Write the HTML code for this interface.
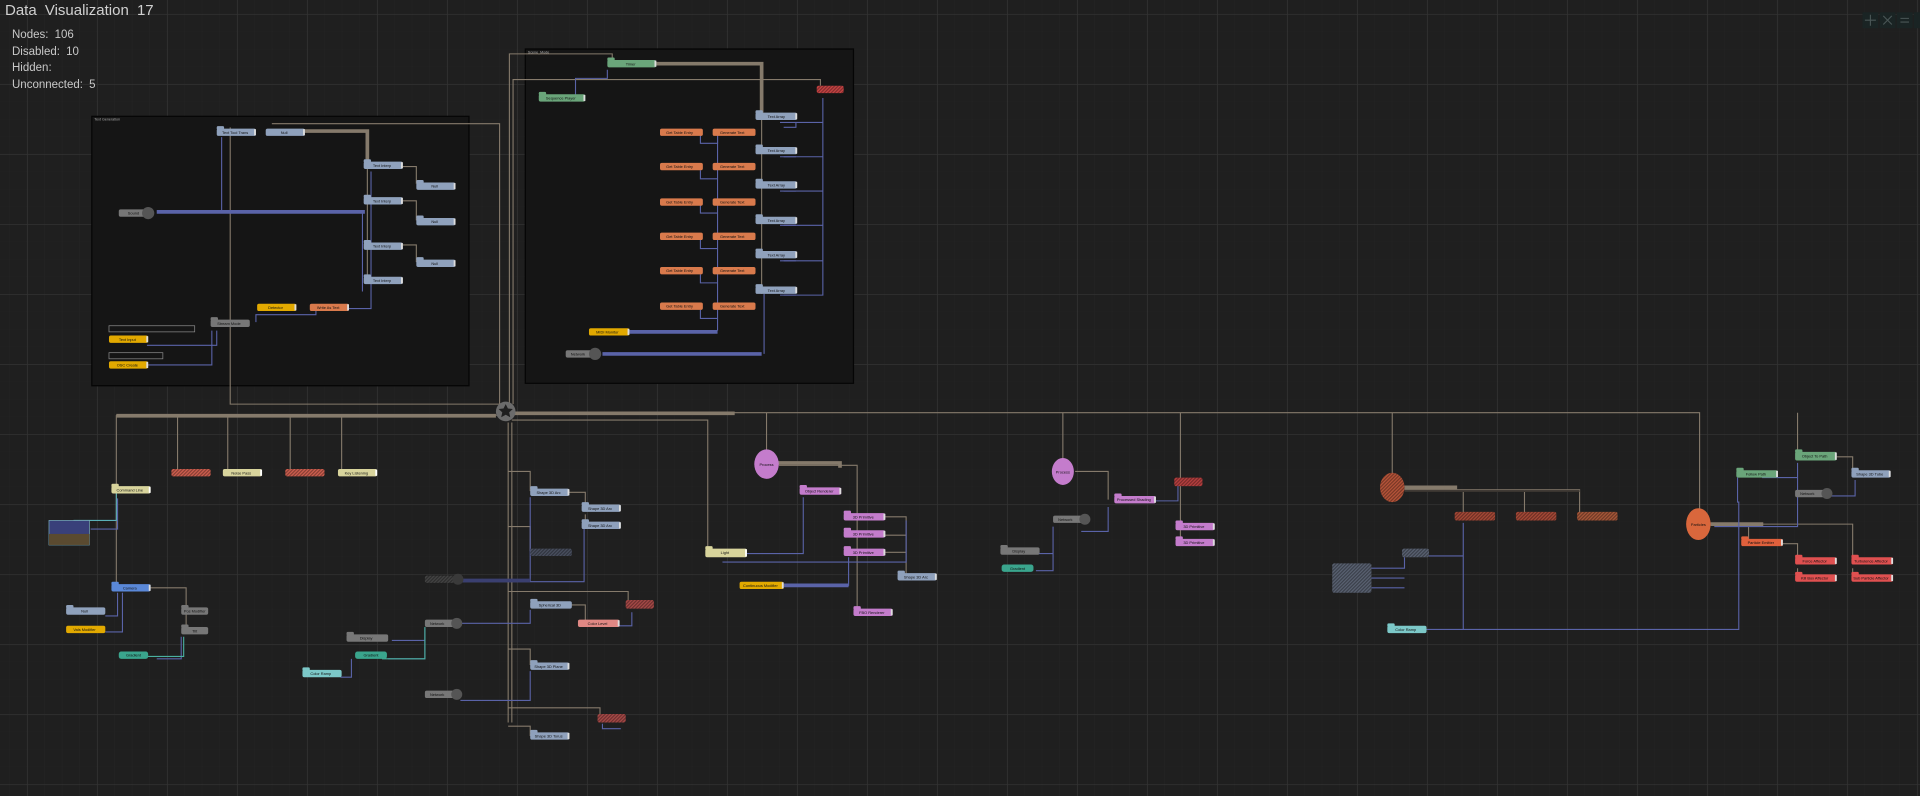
<!DOCTYPE html>
<html><head><meta charset="utf-8"><style>
html,body{margin:0;padding:0;background:#1f1f1f;width:1920px;height:796px;overflow:hidden}
#t{position:absolute;left:5px;top:2px;font:15px "Liberation Sans",sans-serif;color:#d0d0d0;word-spacing:4px}
#s{position:absolute;left:12px;top:27px;font:11.5px/16.5px "Liberation Sans",sans-serif;color:#c8c8c8;word-spacing:3px}
svg{position:absolute;left:0;top:0}
.n text{font:3.2px "Liberation Sans",sans-serif;fill:#111;text-anchor:middle}
</style></head><body>
<svg width="1920" height="796" viewBox="0 0 1568 650" preserveAspectRatio="none">
<defs>
<pattern id="gm" width="14.29" height="14.29" patternUnits="userSpaceOnUse" x="22" y="11.4"><path d="M0 0H14.29M0 0V14.29" stroke="#242424" stroke-width="0.6"/></pattern>
<pattern id="gM" width="57.17" height="57.17" patternUnits="userSpaceOnUse" x="22" y="11.4"><path d="M0 0H57.17M0 0V57.17" stroke="#323232" stroke-width="1.3"/></pattern>
<pattern id="h" width="2" height="2" patternUnits="userSpaceOnUse" patternTransform="rotate(45)"><rect width="1" height="2" fill="#000" opacity="0.35"/></pattern>
</defs>
<rect width="1568" height="650" fill="#1f1f1f"/>
<rect width="1568" height="650" fill="url(#gm)"/>
<rect width="1568" height="650" fill="url(#gM)"/>

<rect x="75" y="95" width="308" height="220" fill="#151515" stroke="#050505" stroke-width="1"/>
<text x="77" y="98.5" font-size="3" fill="#aaa" font-family="Liberation Sans">Text Generation</text>
<rect x="429" y="40" width="268" height="273" fill="#151515" stroke="#050505" stroke-width="1"/>
<text x="431" y="43.5" font-size="3" fill="#aaa" font-family="Liberation Sans">Scene_Mode</text>

<g stroke="#857a6b" fill="none" stroke-width="0.9">
<path d="M188 104V330H413"/>
<path d="M222 101H408V330"/>
<path d="M500 49V44H416V330"/>
<path d="M670 70V65H419V330"/>
<path d="M300 132V108"/>
<path d="M300 134V230M313 136H340V150M313 164H340V180M313 200H340V214"/>
<path d="M622 94V240"/>
<path d="M95 339H413M413 337H1388V428"/>
<path d="M95 339V400M145 339V386M186 339V386M237 339V386M279 339V386"/>
<path d="M95 400V479M120 480H152V499V515"/>
<path d="M415 345V590M418 345V590"/>
<path d="M418 343H578V451M626 337V379M868 337V385M964 337V393M1137 337V398M1468 337V372"/>
<path d="M415 385H433V401M452 402H478V414M478 420V430"/>
<path d="M415 430H433V450"/>
<path d="M415 483H513V493M452 494H478V507"/>
<path d="M415 530H433V543"/>
<path d="M415 578H490V586M415 593H433V601"/>
<path d="M636 380H700V422M700 422V500M710 422H740V471M710 437H740M710 451H740"/>
<path d="M878 385H905V408"/>
<path d="M964 393V443"/>
<path d="M1147 400H1290V421M1195 400V421M1245 400V421"/>
<path d="M1397 428H1513V458M1428 428V443M1447 444H1468V458M1468 464V472M1513 464V472"/>
<path d="M1483 373H1513V386"/>
</g>
<g stroke="#857a6b" fill="none" stroke-width="3">
<path d="M240 107H300V132"/>
<path d="M525 52H622V92"/>
<path d="M632 378H686V382"/>
<path d="M1147 398H1190"/>
<path d="M1397 428H1440"/>
<path d="M95 339.5H405M420 337.5H600"/>
</g>
<g stroke="#3a3530" fill="none" stroke-width="1.5"><path d="M1147 401H1290"/></g>

<g stroke="#5a63a8" fill="none" stroke-width="0.9">
<path d="M181 112V172M296 173V238M303 140V252H283M258 251V257H209V263"/>
<path d="M173 270V298H120M177 270V282H120"/>
<path d="M496 57V64H470V80"/>
<path d="M572 110V117H586V110M572 139V146H586M572 167V174H586M572 196V203H586M572 224V231H586M572 253V260H586"/>
<path d="M586 110V270M650 100V104H640M650 128H640M650 156H640M650 184H640M650 213H640M650 241H640"/>
<path d="M624 240V289M637 100H672V80M637 128H672M637 156H672M637 184H672M637 213H672M637 241H672V80"/>
<path d="M74 432H96V407M86 503H96V484M86 516H100V484M128 538H148V520"/>
<path d="M375 475H433V406M375 475H477V432M376 509H433V498M320 523H347V513M317 538H347V513M278 553H287V538"/>
<path d="M376 572H433V548M507 595H492V591M498 511H516V500"/>
<path d="M590 452H656V406M590 459H740V425M640 478H693V455"/>
<path d="M883 434H905V414M846 452H860V430M846 466H860V430M928 409H962V396"/>
<path d="M1165 514H1420V410H1419V390M1165 514H1195V427M1167 454H1195V427M1120 464H1147V455M1120 472H1147M1120 480H1147"/>
<path d="M1439 390H1468V378M1400 430H1468V384M1491 405H1515V392"/>
</g>
<g stroke="#5a63a8" fill="none" stroke-width="3">
<path d="M128 173H298"/>
<path d="M513 271H586M492 289H622"/>
<path d="M640 478H693"/>
<path d="M376 474H433" stroke="#3a3f70"/>
</g>
<path d="M60 425H95V402" stroke="#5ab0b8" fill="none" stroke-width="0.9"/>
<path d="M120 536H150V520M312 538H347V512" stroke="#4ab0a0" fill="none" stroke-width="0.9"/>

<circle cx="413" cy="336" r="8" fill="#6b6b6b"/>
<path d="M413 330l1.8 3.6 4 .4-3 2.7.9 4-3.7-2-3.7 2 .9-4-3-2.7 4-.4z" fill="#1f1f1f"/>

<g class="n">
<g transform="translate(177,105)"><rect x="0" y="-2" width="6" height="3" rx="1" fill="#8fa1bc"/><rect width="32" height="6" rx="1.5" fill="#8fa1bc"/><rect x="30.5" y="0.5" width="1.5" height="5" fill="#ddd"/><text x="15" y="4.3">Text Tool Trans</text></g>
<g transform="translate(217,105)"><rect width="32" height="6" rx="1.5" fill="#8fa1bc"/><rect x="30.5" y="0.5" width="1.5" height="5" fill="#ddd"/><text x="15" y="4.3">Null</text></g>
<g transform="translate(297,132)"><rect x="0" y="-2" width="6" height="3" rx="1" fill="#8fa1bc"/><rect width="32" height="6" rx="1.5" fill="#8fa1bc"/><rect x="30.5" y="0.5" width="1.5" height="5" fill="#ddd"/><text x="15" y="4.3">Text Interp</text></g>
<g transform="translate(297,161)"><rect x="0" y="-2" width="6" height="3" rx="1" fill="#8fa1bc"/><rect width="32" height="6" rx="1.5" fill="#8fa1bc"/><rect x="30.5" y="0.5" width="1.5" height="5" fill="#ddd"/><text x="15" y="4.3">Text Interp</text></g>
<g transform="translate(297,198)"><rect x="0" y="-2" width="6" height="3" rx="1" fill="#8fa1bc"/><rect width="32" height="6" rx="1.5" fill="#8fa1bc"/><rect x="30.5" y="0.5" width="1.5" height="5" fill="#ddd"/><text x="15" y="4.3">Text Interp</text></g>
<g transform="translate(297,226)"><rect x="0" y="-2" width="6" height="3" rx="1" fill="#8fa1bc"/><rect width="32" height="6" rx="1.5" fill="#8fa1bc"/><rect x="30.5" y="0.5" width="1.5" height="5" fill="#ddd"/><text x="15" y="4.3">Text Interp</text></g>
<g transform="translate(340,149)"><rect x="0" y="-2" width="6" height="3" rx="1" fill="#8fa1bc"/><rect width="32" height="6" rx="1.5" fill="#8fa1bc"/><rect x="30.5" y="0.5" width="1.5" height="5" fill="#ddd"/><text x="15" y="4.3">Null</text></g>
<g transform="translate(340,178)"><rect x="0" y="-2" width="6" height="3" rx="1" fill="#8fa1bc"/><rect width="32" height="6" rx="1.5" fill="#8fa1bc"/><rect x="30.5" y="0.5" width="1.5" height="5" fill="#ddd"/><text x="15" y="4.3">Null</text></g>
<g transform="translate(340,212)"><rect x="0" y="-2" width="6" height="3" rx="1" fill="#8fa1bc"/><rect width="32" height="6" rx="1.5" fill="#8fa1bc"/><rect x="30.5" y="0.5" width="1.5" height="5" fill="#ddd"/><text x="15" y="4.3">Null</text></g>
<g transform="translate(97,171)"><rect width="28" height="6" rx="1.5" fill="#777"/><circle cx="24" cy="3" r="5" fill="#555"/><text x="12" y="4.3">Sound</text></g>
<g transform="translate(172,261)"><rect x="0" y="-2" width="6" height="3" rx="1" fill="#777"/><rect width="32" height="6" rx="1.5" fill="#777"/><text x="15" y="4.3">Stream Mode</text></g>
<g transform="translate(210,248)"><rect width="32" height="6" rx="1.5" fill="#e2a900"/><rect x="30.5" y="0.5" width="1.5" height="5" fill="#ddd"/><text x="15" y="4.3">Detector</text></g>
<g transform="translate(253,248)"><rect width="32" height="6" rx="1.5" fill="#d97a4c"/><rect x="30.5" y="0.5" width="1.5" height="5" fill="#ddd"/><text x="15" y="4.3">Write As Text</text></g>
<rect x="89" y="266" width="70" height="5" fill="none" stroke="#888" stroke-width="0.6"/>
<rect x="89" y="288" width="44" height="5" fill="none" stroke="#888" stroke-width="0.6"/>
<g transform="translate(89,274)"><rect width="32" height="6" rx="1.5" fill="#e2a900"/><rect x="30.5" y="0.5" width="1.5" height="5" fill="#ddd"/><text x="15" y="4.3">Text Input</text></g>
<g transform="translate(89,295)"><rect width="32" height="6" rx="1.5" fill="#e2a900"/><rect x="30.5" y="0.5" width="1.5" height="5" fill="#ddd"/><text x="15" y="4.3">OSC Create</text></g>
<g transform="translate(496,49)"><rect x="0" y="-2" width="6" height="3" rx="1" fill="#6aa57a"/><rect width="40" height="6" rx="1.5" fill="#6aa57a"/><rect x="38.5" y="0.5" width="1.5" height="5" fill="#ddd"/><text x="19" y="4.3">Timer</text></g>
<g transform="translate(440,77)"><rect x="0" y="-2" width="6" height="3" rx="1" fill="#6aa57a"/><rect width="38" height="6" rx="1.5" fill="#6aa57a"/><rect x="36.5" y="0.5" width="1.5" height="5" fill="#ddd"/><text x="18" y="4.3">Sequence Player</text></g>
<g transform="translate(667,70)"><rect width="22" height="6" rx="1.5" fill="#c84444"/><rect width="22" height="6" rx="1.5" fill="url(#h)"/></g>
<g transform="translate(617,92)"><rect x="0" y="-2" width="6" height="3" rx="1" fill="#8fa1bc"/><rect width="34" height="6" rx="1.5" fill="#8fa1bc"/><rect x="32.5" y="0.5" width="1.5" height="5" fill="#ddd"/><text x="17" y="4.3">Text Array</text></g>
<g transform="translate(617,120)"><rect x="0" y="-2" width="6" height="3" rx="1" fill="#8fa1bc"/><rect width="34" height="6" rx="1.5" fill="#8fa1bc"/><rect x="32.5" y="0.5" width="1.5" height="5" fill="#ddd"/><text x="17" y="4.3">Text Array</text></g>
<g transform="translate(617,148)"><rect x="0" y="-2" width="6" height="3" rx="1" fill="#8fa1bc"/><rect width="34" height="6" rx="1.5" fill="#8fa1bc"/><rect x="32.5" y="0.5" width="1.5" height="5" fill="#ddd"/><text x="17" y="4.3">Text Array</text></g>
<g transform="translate(617,177)"><rect x="0" y="-2" width="6" height="3" rx="1" fill="#8fa1bc"/><rect width="34" height="6" rx="1.5" fill="#8fa1bc"/><rect x="32.5" y="0.5" width="1.5" height="5" fill="#ddd"/><text x="17" y="4.3">Text Array</text></g>
<g transform="translate(617,205)"><rect x="0" y="-2" width="6" height="3" rx="1" fill="#8fa1bc"/><rect width="34" height="6" rx="1.5" fill="#8fa1bc"/><rect x="32.5" y="0.5" width="1.5" height="5" fill="#ddd"/><text x="17" y="4.3">Text Array</text></g>
<g transform="translate(617,234)"><rect x="0" y="-2" width="6" height="3" rx="1" fill="#8fa1bc"/><rect width="34" height="6" rx="1.5" fill="#8fa1bc"/><rect x="32.5" y="0.5" width="1.5" height="5" fill="#ddd"/><text x="17" y="4.3">Text Array</text></g>
<g fill="#d97a4c">
<rect x="539" y="105" width="35" height="6" rx="1.5"/><rect x="582" y="105" width="35" height="6" rx="1.5"/>
<rect x="539" y="133" width="35" height="6" rx="1.5"/><rect x="582" y="133" width="35" height="6" rx="1.5"/>
<rect x="539" y="162" width="35" height="6" rx="1.5"/><rect x="582" y="162" width="35" height="6" rx="1.5"/>
<rect x="539" y="190" width="35" height="6" rx="1.5"/><rect x="582" y="190" width="35" height="6" rx="1.5"/>
<rect x="539" y="218" width="35" height="6" rx="1.5"/><rect x="582" y="218" width="35" height="6" rx="1.5"/>
<rect x="539" y="247" width="35" height="6" rx="1.5"/><rect x="582" y="247" width="35" height="6" rx="1.5"/>
</g>
<g><text x="555" y="109.3">Get Table Entry</text><text x="598" y="109.3">Generate Text</text><text x="555" y="137.3">Get Table Entry</text><text x="598" y="137.3">Generate Text</text><text x="555" y="166.3">Get Table Entry</text><text x="598" y="166.3">Generate Text</text><text x="555" y="194.3">Get Table Entry</text><text x="598" y="194.3">Generate Text</text><text x="555" y="222.3">Get Table Entry</text><text x="598" y="222.3">Generate Text</text><text x="555" y="251.3">Get Table Entry</text><text x="598" y="251.3">Generate Text</text></g>
<g transform="translate(481,268)"><rect width="33" height="6" rx="1.5" fill="#e2a900"/><rect x="31.5" y="0.5" width="1.5" height="5" fill="#ddd"/><text x="15" y="4.3">MIDI Monitor</text></g>
<g transform="translate(462,286)"><rect width="26" height="6" rx="1.5" fill="#777"/><circle cx="24" cy="3" r="5" fill="#555"/><text x="10" y="4.3">Network</text></g>

<g transform="translate(91,397)"><rect x="0" y="-2" width="6" height="3" rx="1" fill="#d8d49c"/><rect width="32" height="6" rx="1.5" fill="#d8d49c"/><rect x="30.5" y="0.5" width="1.5" height="5" fill="#fff"/><text x="15" y="4.3">Command Line</text></g>
<g transform="translate(140,383)"><rect width="32" height="6" rx="1.5" fill="#d06050"/><rect width="32" height="6" fill="url(#h)"/></g>
<g transform="translate(182,383)"><rect width="32" height="6" rx="1.5" fill="#d8d49c"/><rect x="30.5" y="0.5" width="1.5" height="5" fill="#fff"/><text x="15" y="4.3">Noise Pass</text></g>
<g transform="translate(233,383)"><rect width="32" height="6" rx="1.5" fill="#d06050"/><rect width="32" height="6" fill="url(#h)"/></g>
<g transform="translate(276,383)"><rect width="32" height="6" rx="1.5" fill="#d8d49c"/><rect x="30.5" y="0.5" width="1.5" height="5" fill="#fff"/><text x="15" y="4.3">Key Listening</text></g>
<rect x="40" y="425" width="33" height="20" fill="#39407a" stroke="#7ab" stroke-width="0.6"/><rect x="40" y="436" width="33" height="9" fill="#5a4a30"/>
<g transform="translate(91,477)"><rect x="0" y="-2" width="6" height="3" rx="1" fill="#5a88d8"/><rect width="32" height="6" rx="1.5" fill="#5a88d8"/><rect x="30.5" y="0.5" width="1.5" height="5" fill="#ddd"/><text x="15" y="4.3">Camera</text></g>
<g transform="translate(54,496)"><rect x="0" y="-2" width="6" height="3" rx="1" fill="#8fa1bc"/><rect width="32" height="6" rx="1.5" fill="#8fa1bc"/><text x="15" y="4.3">Null</text></g>
<g transform="translate(54,511)"><rect width="32" height="6" rx="1.5" fill="#e2a900"/><text x="15" y="4.3">Vals Modifier</text></g>
<g transform="translate(148,496)"><rect x="0" y="-2" width="6" height="3" rx="1" fill="#777"/><rect width="22" height="6" rx="1.5" fill="#777"/><text x="11" y="4.3">Pos Modifier</text></g>
<g transform="translate(148,512)"><rect x="0" y="-2" width="6" height="3" rx="1" fill="#777"/><rect width="22" height="6" rx="1.5" fill="#777"/><text x="11" y="4.3">Tilt</text></g>
<g transform="translate(97,532)"><rect width="24" height="6" rx="2" fill="#3aa58d"/><text x="12" y="4.3">Gradient</text></g>

<g transform="translate(433,399)"><rect x="0" y="-2" width="6" height="3" rx="1" fill="#8fa1bc"/><rect width="32" height="6" rx="1.5" fill="#8fa1bc"/><rect x="30.5" y="0.5" width="1.5" height="5" fill="#ddd"/><text x="15" y="4.3">Shape 3D Arc</text></g>
<g transform="translate(475,412)"><rect x="0" y="-2" width="6" height="3" rx="1" fill="#8fa1bc"/><rect width="32" height="6" rx="1.5" fill="#8fa1bc"/><rect x="30.5" y="0.5" width="1.5" height="5" fill="#ddd"/><text x="15" y="4.3">Shape 3D Arc</text></g>
<g transform="translate(475,426)"><rect x="0" y="-2" width="6" height="3" rx="1" fill="#8fa1bc"/><rect width="32" height="6" rx="1.5" fill="#8fa1bc"/><rect x="30.5" y="0.5" width="1.5" height="5" fill="#ddd"/><text x="15" y="4.3">Shape 3D Arc</text></g>
<g transform="translate(433,448)"><rect width="34" height="6" rx="1.5" fill="#4a5060"/><rect width="34" height="6" fill="url(#h)"/></g>
<g transform="translate(347,470)"><rect width="28" height="6" rx="1.5" fill="#444"/><rect width="28" height="6" fill="url(#h)"/><circle cx="27" cy="3" r="4.5" fill="#3a3a3a"/></g>
<g transform="translate(433,491)"><rect x="0" y="-2" width="6" height="3" rx="1" fill="#8fa1bc"/><rect width="34" height="6" rx="1.5" fill="#8fa1bc"/><text x="16" y="4.3">Spherical 3D</text></g>
<g transform="translate(472,506)"><rect width="34" height="6" rx="1.5" fill="#e08884"/><rect x="32.5" y="0.5" width="1.5" height="5" fill="#ddd"/><text x="16" y="4.3">Color Level</text></g>
<g transform="translate(511,490)"><rect width="23" height="7" rx="1.5" fill="#a84a48"/><rect width="23" height="7" fill="url(#h)"/></g>
<g transform="translate(433,541)"><rect x="0" y="-2" width="6" height="3" rx="1" fill="#8fa1bc"/><rect width="32" height="6" rx="1.5" fill="#8fa1bc"/><rect x="30.5" y="0.5" width="1.5" height="5" fill="#ddd"/><text x="15" y="4.3">Shape 3D Plane</text></g>
<g transform="translate(488,583)"><rect width="23" height="7" rx="1.5" fill="#a84a48"/><rect width="23" height="7" fill="url(#h)"/></g>
<g transform="translate(433,598)"><rect x="0" y="-2" width="6" height="3" rx="1" fill="#8fa1bc"/><rect width="32" height="6" rx="1.5" fill="#8fa1bc"/><rect x="30.5" y="0.5" width="1.5" height="5" fill="#ddd"/><text x="15" y="4.3">Shape 3D Torus</text></g>
<g transform="translate(283,518)"><rect x="0" y="-2" width="6" height="3" rx="1" fill="#777"/><rect width="34" height="6" rx="1.5" fill="#777"/><text x="16" y="4.3">Display</text></g>
<g transform="translate(347,506)"><rect width="24" height="6" rx="1.5" fill="#777"/><circle cx="26" cy="3" r="4.5" fill="#555"/><text x="10" y="4.3">Network</text></g>
<g transform="translate(290,532)"><rect width="26" height="6" rx="2" fill="#3aa58d"/><text x="13" y="4.3">Gradient</text></g>
<g transform="translate(247,547)"><rect x="0" y="-2" width="6" height="3" rx="1" fill="#7cc8c8"/><rect width="32" height="6" rx="1.5" fill="#7cc8c8"/><text x="15" y="4.3">Color Ramp</text></g>
<g transform="translate(347,564)"><rect width="24" height="6" rx="1.5" fill="#777"/><circle cx="26" cy="3" r="4.5" fill="#555"/><text x="10" y="4.3">Network</text></g>

<g transform="translate(576,448)"><rect x="0" y="-2" width="6" height="3" rx="1" fill="#d8d49c"/><rect width="34" height="7" rx="1.5" fill="#d8d49c"/><rect x="32.5" y="0.5" width="1.5" height="6" fill="#fff"/><text x="16" y="4.5">Light</text></g>
<ellipse cx="626" cy="379" rx="10" ry="12" fill="#c47ccc"/><text x="626" y="380.5" font-size="3" text-anchor="middle" font-family="Liberation Sans">Process</text>
<g transform="translate(653,398)"><rect x="0" y="-2" width="6" height="3" rx="1" fill="#c47ccc"/><rect width="34" height="6" rx="1.5" fill="#c47ccc"/><rect x="32.5" y="0.5" width="1.5" height="5" fill="#ddd"/><text x="16" y="4.3">Object Renderer</text></g>
<g transform="translate(689,419)"><rect x="0" y="-2" width="6" height="3" rx="1" fill="#c47ccc"/><rect width="34" height="6" rx="1.5" fill="#c47ccc"/><rect x="32.5" y="0.5" width="1.5" height="5" fill="#ddd"/><text x="16" y="4.3">3D Primitive</text></g>
<g transform="translate(689,433)"><rect x="0" y="-2" width="6" height="3" rx="1" fill="#c47ccc"/><rect width="34" height="6" rx="1.5" fill="#c47ccc"/><rect x="32.5" y="0.5" width="1.5" height="5" fill="#ddd"/><text x="16" y="4.3">3D Primitive</text></g>
<g transform="translate(689,448)"><rect x="0" y="-2" width="6" height="3" rx="1" fill="#c47ccc"/><rect width="34" height="6" rx="1.5" fill="#c47ccc"/><rect x="32.5" y="0.5" width="1.5" height="5" fill="#ddd"/><text x="16" y="4.3">3D Primitive</text></g>
<g transform="translate(697,497)"><rect x="0" y="-2" width="6" height="3" rx="1" fill="#c47ccc"/><rect width="32" height="6" rx="1.5" fill="#c47ccc"/><rect x="30.5" y="0.5" width="1.5" height="5" fill="#ddd"/><text x="15" y="4.3">FBO Renderer</text></g>
<g transform="translate(733,468)"><rect x="0" y="-2" width="6" height="3" rx="1" fill="#8fa1bc"/><rect width="32" height="6" rx="1.5" fill="#8fa1bc"/><rect x="30.5" y="0.5" width="1.5" height="5" fill="#ddd"/><text x="15" y="4.3">Shape 3D Arc</text></g>
<g transform="translate(604,475)"><rect width="36" height="6" rx="1.5" fill="#e2a900"/><rect x="34.5" y="0.5" width="1.5" height="5" fill="#ddd"/><text x="17" y="4.3">Continuous Modifier</text></g>

<ellipse cx="868" cy="385" rx="9" ry="11" fill="#c47ccc"/><text x="868" y="386.5" font-size="3" text-anchor="middle" font-family="Liberation Sans">Process</text>
<g transform="translate(959,390)"><rect width="23" height="7" rx="1.5" fill="#b84040"/><rect width="23" height="7" fill="url(#h)"/></g>
<g transform="translate(910,405)"><rect x="0" y="-2" width="6" height="3" rx="1" fill="#c47ccc"/><rect width="34" height="6" rx="1.5" fill="#c47ccc"/><rect x="32.5" y="0.5" width="1.5" height="5" fill="#ddd"/><text x="16" y="4.3">Processed Shading</text></g>
<g transform="translate(860,421)"><rect width="24" height="6" rx="1.5" fill="#777"/><circle cx="26" cy="3" r="4.5" fill="#555"/><text x="10" y="4.3">Network</text></g>
<g transform="translate(817,447)"><rect x="0" y="-2" width="6" height="3" rx="1" fill="#777"/><rect width="32" height="6" rx="1.5" fill="#777"/><text x="15" y="4.3">Display</text></g>
<g transform="translate(818,461)"><rect width="26" height="6" rx="2" fill="#3aa58d"/><text x="13" y="4.3">Gradient</text></g>
<g transform="translate(960,427)"><rect x="0" y="-2" width="6" height="3" rx="1" fill="#c47ccc"/><rect width="32" height="6" rx="1.5" fill="#c47ccc"/><rect x="30.5" y="0.5" width="1.5" height="5" fill="#ddd"/><text x="15" y="4.3">3D Primitive</text></g>
<g transform="translate(960,440)"><rect x="0" y="-2" width="6" height="3" rx="1" fill="#c47ccc"/><rect width="32" height="6" rx="1.5" fill="#c47ccc"/><rect x="30.5" y="0.5" width="1.5" height="5" fill="#ddd"/><text x="15" y="4.3">3D Primitive</text></g>

<ellipse cx="1137" cy="398" rx="10" ry="12" fill="#b8553a"/><ellipse cx="1137" cy="398" rx="10" ry="12" fill="url(#h)"/>
<g transform="translate(1188,418)"><rect width="33" height="7" rx="1.5" fill="#a84a38"/><rect width="33" height="7" fill="url(#h)"/></g>
<g transform="translate(1238,418)"><rect width="33" height="7" rx="1.5" fill="#a84a38"/><rect width="33" height="7" fill="url(#h)"/></g>
<g transform="translate(1288,418)"><rect width="33" height="7" rx="1.5" fill="#a8583a"/><rect width="33" height="7" fill="url(#h)"/></g>
<g transform="translate(1145,448)"><rect width="22" height="7" rx="1.5" fill="#5a6272"/><rect width="22" height="7" fill="url(#h)"/></g>
<g transform="translate(1088,460)"><rect width="32" height="24" rx="1.5" fill="#5a6272"/><rect width="32" height="24" fill="url(#h)"/></g>
<g transform="translate(1133,511)"><rect x="0" y="-2" width="6" height="3" rx="1" fill="#7cc8c8"/><rect width="32" height="6" rx="1.5" fill="#7cc8c8"/><text x="15" y="4.3">Color Ramp</text></g>

<ellipse cx="1387" cy="428" rx="10" ry="13" fill="#d9673c"/><text x="1387" y="429.5" font-size="3" text-anchor="middle" font-family="Liberation Sans">Particles</text>
<g transform="translate(1466,369)"><rect x="0" y="-2" width="6" height="3" rx="1" fill="#6aa57a"/><rect width="34" height="7" rx="1.5" fill="#6aa57a"/><rect x="32.5" y="0.5" width="1.5" height="6" fill="#ddd"/><text x="16" y="4.5">Object To Path</text></g>
<g transform="translate(1418,384)"><rect x="0" y="-2" width="6" height="3" rx="1" fill="#6aa57a"/><rect width="34" height="6" rx="1.5" fill="#6aa57a"/><rect x="32.5" y="0.5" width="1.5" height="5" fill="#ddd"/><text x="16" y="4.3">Follow Path</text></g>
<g transform="translate(1512,384)"><rect x="0" y="-2" width="6" height="3" rx="1" fill="#8fa1bc"/><rect width="32" height="6" rx="1.5" fill="#8fa1bc"/><rect x="30.5" y="0.5" width="1.5" height="5" fill="#ddd"/><text x="15" y="4.3">Shape 3D Tube</text></g>
<g transform="translate(1466,400)"><rect width="24" height="6" rx="1.5" fill="#777"/><circle cx="26" cy="3" r="4.5" fill="#555"/><text x="10" y="4.3">Network</text></g>
<g transform="translate(1422,440)"><rect x="0" y="-2" width="6" height="3" rx="1" fill="#e0603c"/><rect width="34" height="6" rx="1.5" fill="#e0603c"/><rect x="32.5" y="0.5" width="1.5" height="5" fill="#ddd"/><text x="16" y="4.3">Particle Emitter</text></g>
<g transform="translate(1466,455)"><rect x="0" y="-2" width="6" height="3" rx="1" fill="#e05050"/><rect width="34" height="6" rx="1.5" fill="#e05050"/><rect x="32.5" y="0.5" width="1.5" height="5" fill="#ddd"/><text x="16" y="4.3">Force Affector</text></g>
<g transform="translate(1512,455)"><rect x="0" y="-2" width="6" height="3" rx="1" fill="#e05050"/><rect width="34" height="6" rx="1.5" fill="#e05050"/><rect x="32.5" y="0.5" width="1.5" height="5" fill="#ddd"/><text x="16" y="4.3">Turbulence Affector</text></g>
<g transform="translate(1466,469)"><rect x="0" y="-2" width="6" height="3" rx="1" fill="#e05050"/><rect width="34" height="6" rx="1.5" fill="#e05050"/><rect x="32.5" y="0.5" width="1.5" height="5" fill="#ddd"/><text x="16" y="4.3">Kill Box Affector</text></g>
<g transform="translate(1512,469)"><rect x="0" y="-2" width="6" height="3" rx="1" fill="#e05050"/><rect width="34" height="6" rx="1.5" fill="#e05050"/><rect x="32.5" y="0.5" width="1.5" height="5" fill="#ddd"/><text x="16" y="4.3">Sub Particle Affector</text></g>
</g>

<g fill="#1a2424">
<rect x="1521" y="10" width="13" height="13"/><rect x="1535" y="10" width="13" height="13"/><rect x="1549" y="10" width="13" height="13"/><rect x="1563" y="10" width="5" height="13"/>
</g>
<g stroke="#4a5656" stroke-width="0.9" fill="none">
<path d="M1527.5 12V21M1523 16.5H1532"/>
<path d="M1538 13L1545 20M1545 13L1538 20"/>
<path d="M1552 15H1559M1552 18H1559"/>
</g>
</svg>
<div id="t">Data  Visualization  17</div>
<div id="s">Nodes:  106<br>Disabled:  10<br>Hidden:<br>Unconnected:  5</div>
</body></html>
